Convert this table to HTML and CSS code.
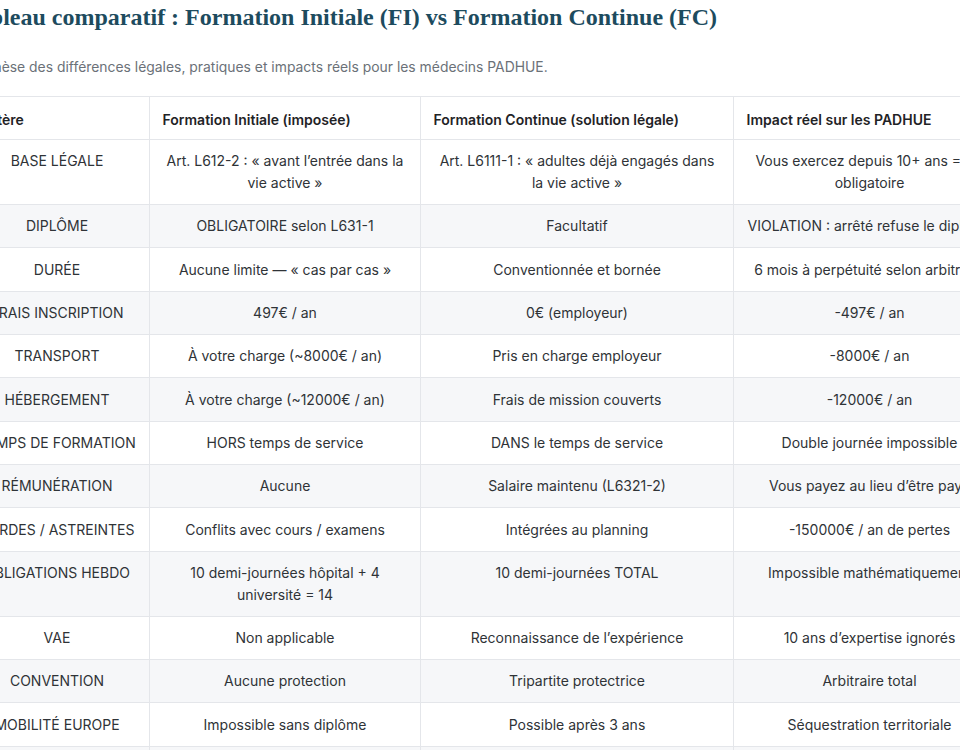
FILE: index.html
```html
<!DOCTYPE html>
<html lang="fr">
<head>
<meta charset="utf-8">
<title>Tableau comparatif</title>
<link rel="stylesheet" href="styles.css">
</head>
<body>
<main class="page">
  <h2 class="title">Tableau comparatif : Formation Initiale (FI) vs Formation Continue (FC)</h2>
  <p class="lead">Synthèse des différences légales, pratiques et impacts réels pour les médecins PADHUE.</p>
  <table class="compare">
    <colgroup>
      <col class="col-crit">
      <col class="col-fi">
      <col class="col-fc">
      <col class="col-impact">
    </colgroup>
    <thead>
      <tr>
        <th>Critère</th>
        <th>Formation Initiale (imposée)</th>
        <th>Formation Continue (solution légale)</th>
        <th>Impact réel sur les PADHUE</th>
      </tr>
    </thead>
    <tbody>
      <tr><td>BASE LÉGALE</td><td>Art. L612-2 : « avant l’entrée dans la vie active »</td><td>Art. L6111-1 : « adultes déjà engagés dans la vie active »</td><td>Vous exercez depuis 10+ ans = FC obligatoire</td></tr>
      <tr><td>DIPLÔME</td><td>OBLIGATOIRE selon L631-1</td><td>Facultatif</td><td>VIOLATION : arrêté refuse le diplôme</td></tr>
      <tr><td>DURÉE</td><td>Aucune limite — « cas par cas »</td><td>Conventionnée et bornée</td><td>6 mois à perpétuité selon arbitraire</td></tr>
      <tr><td>FRAIS INSCRIPTION</td><td>497€ / an</td><td>0€ (employeur)</td><td>-497€ / an</td></tr>
      <tr><td>TRANSPORT</td><td>À votre charge (~8000€ / an)</td><td>Pris en charge employeur</td><td>-8000€ / an</td></tr>
      <tr><td>HÉBERGEMENT</td><td>À votre charge (~12000€ / an)</td><td>Frais de mission couverts</td><td>-12000€ / an</td></tr>
      <tr><td>TEMPS DE FORMATION</td><td>HORS temps de service</td><td>DANS le temps de service</td><td>Double journée impossible</td></tr>
      <tr><td>RÉMUNÉRATION</td><td>Aucune</td><td>Salaire maintenu (L6321-2)</td><td>Vous payez au lieu d’être payé</td></tr>
      <tr><td>GARDES / ASTREINTES</td><td>Conflits avec cours / examens</td><td>Intégrées au planning</td><td>-150000€ / an de pertes</td></tr>
      <tr><td>OBLIGATIONS HEBDO</td><td>10 demi-journées hôpital + 4 université = 14</td><td>10 demi-journées TOTAL</td><td>Impossible mathématiquement</td></tr>
      <tr><td>VAE</td><td>Non applicable</td><td>Reconnaissance de l’expérience</td><td>10 ans d’expertise ignorés</td></tr>
      <tr><td>CONVENTION</td><td>Aucune protection</td><td>Tripartite protectrice</td><td>Arbitraire total</td></tr>
      <tr><td>MOBILITÉ EUROPE</td><td>Impossible sans diplôme</td><td>Possible après 3 ans</td><td>Séquestration territoriale</td></tr>
      <tr><td>RECOURS</td><td>Aucun</td><td>Commission paritaire</td><td>Aucune voie de contestation</td></tr>
    </tbody>
  </table>
</main>
</body>
</html>
```

FILE: styles.css
```css
html {
  overflow: hidden;
}

body {
  margin: 0;
  background: #ffffff;
  font-family: "Inter", "Liberation Sans", sans-serif;
  color: #2f3337;
}

.page {
  width: 1041px;
  margin-left: -36px;
}

.title {
  margin: 3px 0 0;
  font-family: "Liberation Serif", serif;
  font-weight: 700;
  font-size: 24px;
  line-height: 28px;
  color: #1d4b5e;
}

.lead {
  margin: 26px 0 0;
  font-size: 13.9px;
  line-height: 21px;
  color: #6b7178;
}

.compare {
  margin-top: 18px;
  width: 1041px;
  table-layout: fixed;
  border-collapse: collapse;
  font-size: 14px;
  line-height: 21.6px;
}

.col-crit { width: 185px; }
.col-fi { width: 271px; }
.col-fc { width: 313px; }
.col-impact { width: 272px; }

.compare th,
.compare td {
  border: 1px solid #e4e6ea;
  padding: 10.4px 12.5px;
  vertical-align: top;
}

.compare th {
  padding-top: 12px;
  padding-bottom: 8.2px;
  text-align: left;
  font-weight: 600;
  color: #1f2326;
}

.compare td {
  text-align: center;
}

.compare tbody tr:nth-child(even) td {
  background: #f6f7f9;
}
```
